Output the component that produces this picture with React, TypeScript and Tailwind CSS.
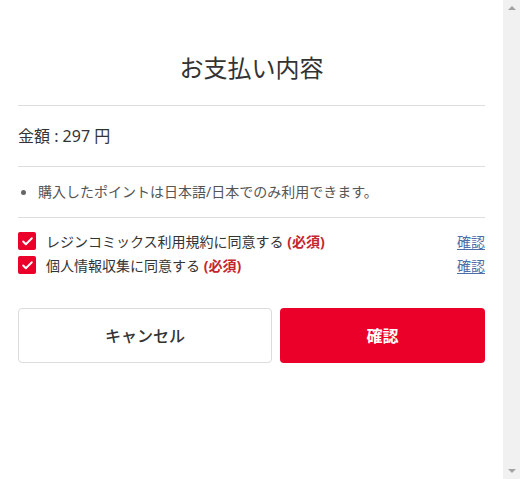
import { Check } from 'lucide-react';

const agreements = [
  { id: 'terms', label: 'レジンコミックス利用規約に同意する' },
  { id: 'privacy', label: '個人情報収集に同意する' },
];

export default function App() {
  return (
    <div
      className="flex h-[479px] bg-white text-[#333]"
      style={{ fontFamily: '"Noto Sans", "Noto Sans CJK JP", sans-serif' }}
    >
      <div className="min-w-0 flex-1 px-[18px] pt-[50px]">
        <h2 className="text-center text-[24px] font-normal leading-[36px] text-[#333]">お支払い内容</h2>

        <div className="mt-[19px] border-t border-[#dedede] py-[18px] text-[16px] leading-[24px]">
          金額 : 297 円
        </div>

        <div className="flex items-center border-t border-[#dedede] py-[15px] text-[14px] leading-[20px] text-[#555]">
          <span className="ml-[3px] mr-[12px] h-[5px] w-[5px] shrink-0 rounded-full bg-[#666]" />
          <span>購入したポイントは日本語/日本でのみ利用できます。</span>
        </div>

        <div className="border-t border-[#dedede] pt-[11px]">
          {agreements.map((item) => (
            <div key={item.id} className="flex h-[24px] items-center text-[14px]">
              <span className="flex h-[18px] w-[18px] shrink-0 items-center justify-center rounded-[2px] bg-[#eb0029]">
                <Check size={13} strokeWidth={3.5} className="text-white" />
              </span>
              <span className="ml-[10px] flex-1">
                {item.label} <b className="font-bold text-[#c4262e]">(必須)</b>
              </span>
              <a className="text-[#4d6ea8] underline underline-offset-2">確認</a>
            </div>
          ))}
        </div>

        <div className="mt-[31px] grid grid-cols-[254px_1fr] gap-2">
          <button
            type="button"
            className="h-[55px] rounded-[4px] border border-[#dcdcdc] bg-white text-[16px] font-medium text-[#333]"
          >
            キャンセル
          </button>
          <button
            type="button"
            className="h-[55px] rounded-[4px] bg-[#eb0029] text-[16px] font-bold text-white"
          >
            確認
          </button>
        </div>
      </div>

      {/* scrollbar track */}
      <div className="flex w-[17px] shrink-0 flex-col items-center justify-between bg-[#f1f1f1] py-[6px]">
        <span className="h-0 w-0 border-x-[4px] border-b-[4px] border-x-transparent border-b-[#a3a3a3]" />
        <span className="h-0 w-0 border-x-[4px] border-t-[4px] border-x-transparent border-t-[#a3a3a3]" />
      </div>
    </div>
  );
}
